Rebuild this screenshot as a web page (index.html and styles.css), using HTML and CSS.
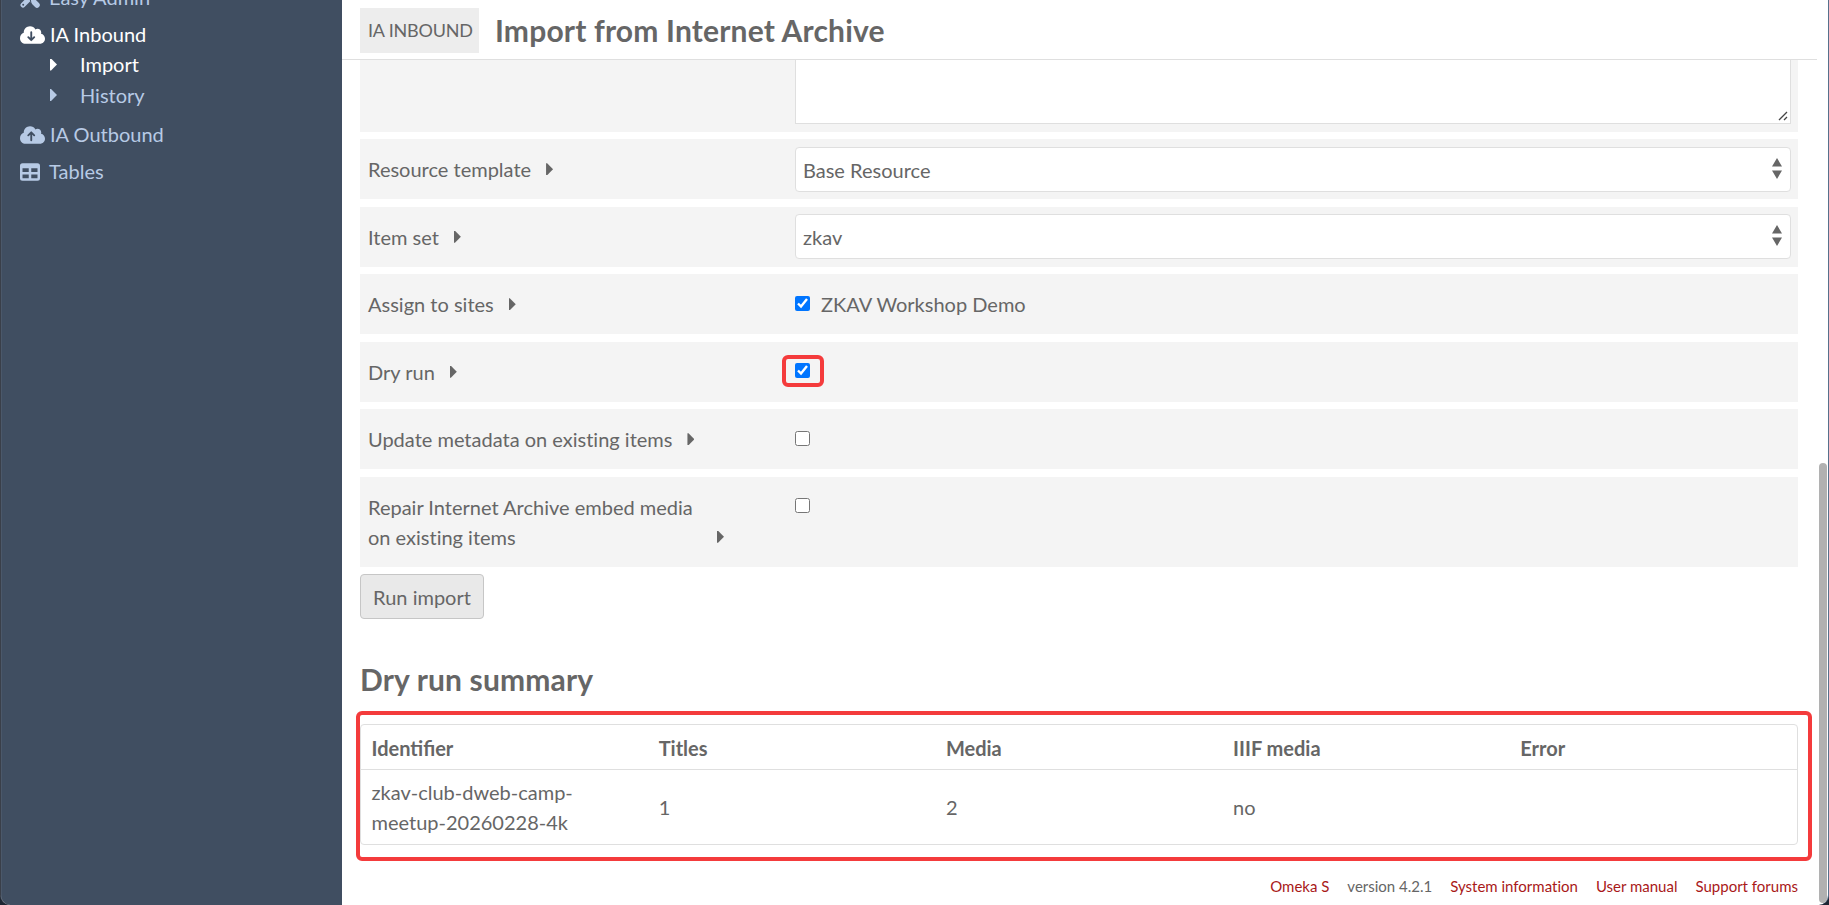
FILE: index.html
```html
<!DOCTYPE html>
<html lang="en">
<head>
<meta charset="utf-8">
<title>Import from Internet Archive</title>
<link rel="stylesheet" href="styles.css">
</head>
<body>
<div class="window">
  <nav class="sidebar">
    <a class="nav-item nav-tools">
      <svg class="nav-icon" width="20" height="20" viewBox="0 0 20 20"><path d="M3 17L16 4" stroke="currentColor" stroke-width="5" stroke-linecap="round"/><path d="M2 2l9 9" stroke="currentColor" stroke-width="2.4"/><path d="M12.500 12.500l4.500 4.500" stroke="currentColor" stroke-width="5.500" stroke-linecap="round"/><path d="M9.500 8L12 20" stroke="#404e61" stroke-width="1"/><circle cx="3.200" cy="16.800" r="1" fill="#404e61"/></svg>
      <span>Easy Admin</span></a>
    <a class="nav-item nav-inbound active">
      <svg class="nav-icon" width="25" height="20" viewBox="0 0 640 512"><path fill="currentColor" d="M537.6 226.600c4.100-10.700 6.400-22.400 6.400-34.600 0-53-43-96-96-96-19.700 0-38.100 6-53.300 16.200C367 64.200 315.300 32 256 32c-88.400 0-160 71.600-160 160 0 2.700.1 5.400.2 8.100C40.200 219.800 0 273.200 0 336c0 79.500 64.500 144 144 144h368c70.700 0 128-57.300 128-128 0-61.900-44-113.600-102.400-125.400z"/><path class="cut" d="M288 184v200M212 312l76 76 76-76"/></svg>
      <span>IA Inbound</span></a>
    <a class="nav-sub active"><i class="caret"></i><span>Import</span></a>
    <a class="nav-sub"><i class="caret"></i><span>History</span></a>
    <a class="nav-item nav-outbound">
      <svg class="nav-icon" width="25" height="20" viewBox="0 0 640 512"><path fill="currentColor" d="M537.6 226.600c4.100-10.700 6.400-22.400 6.400-34.600 0-53-43-96-96-96-19.700 0-38.100 6-53.300 16.200C367 64.200 315.300 32 256 32c-88.400 0-160 71.600-160 160 0 2.700.1 5.400.2 8.100C40.200 219.800 0 273.200 0 336c0 79.500 64.500 144 144 144h368c70.700 0 128-57.300 128-128 0-61.900-44-113.600-102.400-125.400z"/><path class="cut" d="M288 392V192M212 264l76-76 76 76"/></svg>
      <span>IA Outbound</span></a>
    <a class="nav-item">
      <svg class="nav-icon" width="20" height="20" viewBox="0 0 512 512"><path fill="currentColor" fill-rule="evenodd" d="M64 32h384a64 64 0 0 1 64 64v320a64 64 0 0 1-64 64H64a64 64 0 0 1-64-64V96a64 64 0 0 1 64-64zM64 160v96h160v-96zM288 160v96h160v-96zM64 320v96h160v-96zM288 320v96h160v-96z"/></svg>
      <span>Tables</span></a>
  </nav>
  <main class="main">
    <header class="page-header">
      <span class="badge">IA Inbound</span>
      <h1>Import from Internet Archive</h1>
    </header>
    <div class="content">
      <div class="field field-top"><div class="textarea"><svg width="10" height="10" viewBox="0 0 10 10"><path d="M1 9L9 1M6 9l3-3" stroke="#444" stroke-width="1.300"/></svg></div></div>
      <div class="field"><div class="label"><span>Resource template</span><i class="caret"></i></div><div class="select"><span>Base Resource</span><svg width="10" height="21" viewBox="0 0 10 21"><path d="M5 0l5 8.500H0zM5 21l5-8.500H0z" fill="#666"/></svg></div></div>
      <div class="field"><div class="label"><span>Item set</span><i class="caret"></i></div><div class="select"><span>zkav</span><svg width="10" height="21" viewBox="0 0 10 21"><path d="M5 0l5 8.500H0zM5 21l5-8.500H0z" fill="#666"/></svg></div></div>
      <div class="field"><div class="label"><span>Assign to sites</span><i class="caret"></i></div><div class="check"><span class="box"><input type="checkbox" checked></span><span>ZKAV Workshop Demo</span></div></div>
      <div class="field"><div class="label"><span>Dry run</span><i class="caret"></i></div><div class="check"><span class="box marked"><input type="checkbox" checked></span></div></div>
      <div class="field"><div class="label"><span>Update metadata on existing items</span><i class="caret"></i></div><div class="check"><span class="box"><input type="checkbox"></span></div></div>
      <div class="field tall"><div class="label"><span>Repair Internet Archive embed media on existing items</span><i class="caret"></i></div><div class="check"><span class="box"><input type="checkbox"></span></div></div>
      <button class="run">Run import</button>
      <h2>Dry run summary</h2>
      <div class="summary">
        <div class="tr th"><span>Identifier</span><span>Titles</span><span>Media</span><span>IIIF media</span><span>Error</span></div>
        <div class="tr"><span>zkav-club-dweb-camp-<br>meetup-20260228-4k</span><span>1</span><span>2</span><span>no</span><span></span></div>
      </div>
      <footer class="footer"><a>Omeka S</a><span>version 4.2.1</span><a>System information</a><a>User manual</a><a>Support forums</a></footer>
    </div>
  </main>
  <div class="scrollbar"></div>
</div>
</body>
</html>
```
FILE: styles.css
```css
* { box-sizing: border-box; }
body { margin: 0; width: 1829px; height: 905px; overflow: hidden; background: #1d2633; font: 20px/30px Lato, sans-serif; font-variant-ligatures: none; color: #666; }
.window { position: relative; display: flex; width: 1829px; height: 905px; overflow: hidden; background: #fff; border-left: 1px solid #3a3f49; border-right: 1px solid #56718c; border-radius: 0 0 10px 10px; }
.sidebar { flex: 0 0 341px; background: #404e61; border-left: 1px solid #4b586a; color: #b7cae5; overflow: hidden; }
.nav-item { display: flex; align-items: center; gap: 9px; height: 30px; padding-left: 18px; }
.nav-tools { margin-top: -18px; }
.nav-inbound { margin-top: 7px; gap: 5px; }
.nav-outbound { margin: 9px 0 7px; gap: 5px; }
.nav-sub { display: flex; align-items: center; gap: 23px; height: 31px; padding-left: 48px; }
.nav-inbound + .nav-sub { height: 30px; }
.nav-icon { flex: none; fill: none; }
.nav-icon, .nav-sub .caret { margin-top: 1px; }
.cut { stroke: #404e61; stroke-width: 48; stroke-linecap: round; stroke-linejoin: round; fill: none; }
.active { color: #fff; }
.caret { flex: none; width: 7px; height: 12px; background: currentColor; clip-path: polygon(0 0, 15% 0, 100% 50%, 15% 100%, 0 100%); }
.main { flex: 1; display: flex; flex-direction: column; }
.page-header { flex: none; display: flex; align-items: center; height: 60px; width: 1475px; padding: 1px 0 0 18px; border-bottom: 1px solid #dfdfdf; }
.badge { height: 45px; padding: 0 7px 0 8px; background: #ededed; font-size: 18px; letter-spacing: -0.2px; line-height: 45px; text-transform: uppercase; width: 119px; white-space: nowrap; }
h1 { margin: 0 0 0 16px; font-size: 30px; letter-spacing: 0.18px; line-height: 45px; }
.content { width: 1438px; margin-left: 18px; display: flex; flex-direction: column; }
.field { display: flex; align-items: flex-start; min-height: 60px; margin-bottom: 7.5px; padding: 7.5px 7px 7.5px 8px; background: #f4f4f4; }
.field.tall { min-height: 90px; }
.field-top { height: 71.750px; padding-top: 0; }
.textarea { width: 996px; height: 64px; margin-left: 427px; border: 1px solid #dfdfdf; border-top: 0; background: #fff; display: flex; align-items: flex-end; justify-content: flex-end; padding: 2px; }
.label { width: 427px; flex: none; display: flex; align-items: flex-end; gap: 15px; padding-top: 7.500px; }
.label span { max-width: 334px; }
.label .caret { margin-bottom: 9px; }
.select { width: 996px; height: 45px; display: flex; align-items: center; justify-content: space-between; padding: 1px 8px 0 7px; border: 1px solid #dfdfdf; border-radius: 4px; background: #fff; }
.select svg { margin-top: -3px; }
.check { display: flex; gap: 11px; padding-top: 7.500px; }
.box { position: relative; width: 15px; height: 15px; margin-top: 6.500px; }
.box input { display: block; width: 15px; height: 15px; margin: 0; accent-color: #0075ff; }
.marked::after { content: ""; position: absolute; inset: -8px -14px -9px -13px; border: 4px solid #f43b3c; border-radius: 6px; }
.run { width: 124px; height: 45px; padding: 0; border: 1px solid #c6c6c6; border-radius: 4px; background: #e9e9e9; color: #666; font: 20px/30px Lato, sans-serif; }
h2 { margin: 38px 0 0; font-size: 30px; letter-spacing: 0.15px; line-height: 45px; }
.summary { position: relative; margin-top: 22px; height: 121px; border: 1px solid #dfdfdf; border-radius: 4px; }
.summary::after { content: ""; position: absolute; inset: -14px -15px -17px -5px; border: 4px solid #f43b3c; border-radius: 6px; }
.tr { display: grid; grid-template-columns: repeat(5, 1fr); align-items: center; height: 75px; padding-bottom: 2px; }
.tr span { padding-left: 10.500px; }
.th { height: 45px; border-bottom: 1px solid #dfdfdf; font-weight: bold; padding: 2px 0 0; font-variant-ligatures: normal; }
.footer { display: flex; justify-content: flex-end; gap: 18px; margin-top: 29px; font-size: 15px; line-height: 24px; }
.footer a { color: #a91919; }
.scrollbar { position: absolute; left: 1818px; top: 463px; width: 8px; height: 440px; border-radius: 4px; background: #b1b1b1; }
```
